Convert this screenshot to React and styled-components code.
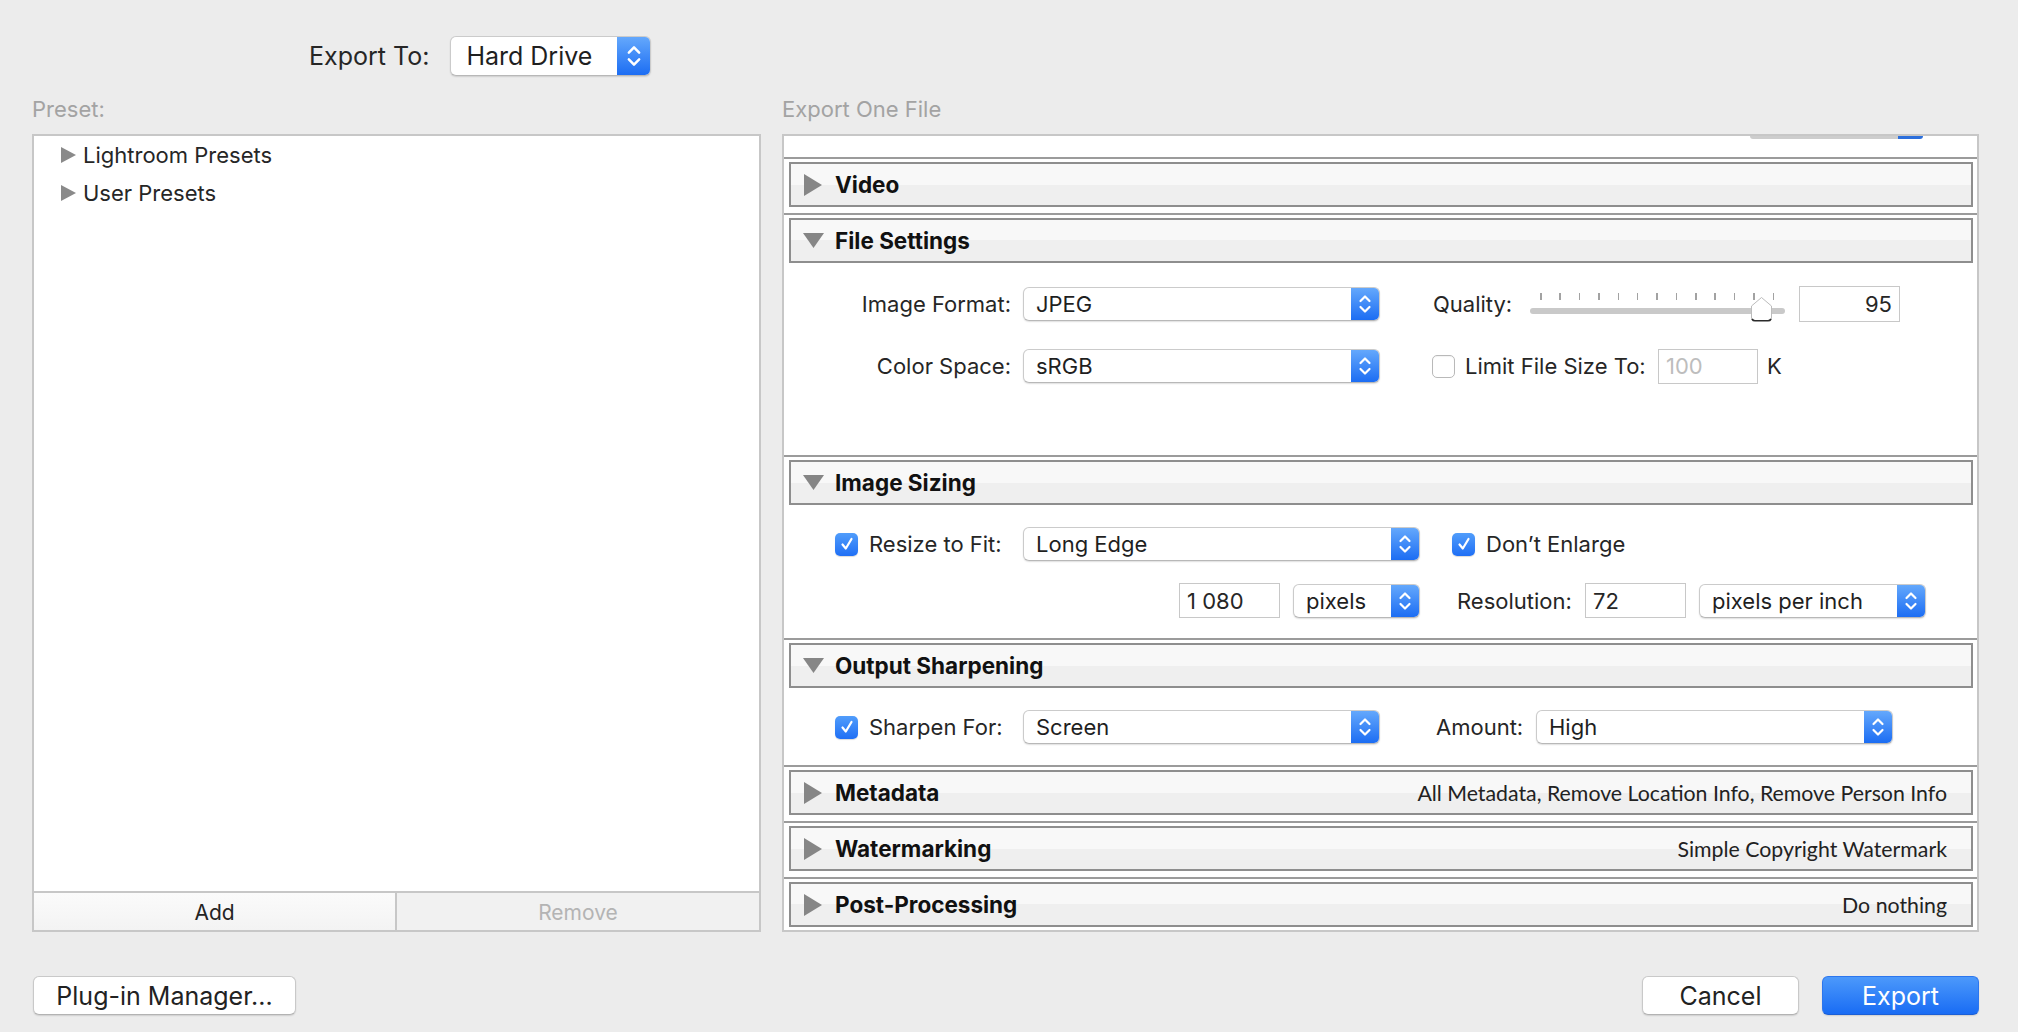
import React from "react";
import styled, { createGlobalStyle } from "styled-components";

const GlobalStyle = createGlobalStyle`
  html, body { margin: 0; padding: 0; background: #ececec; }
  body { font-family: Inter, "Noto Sans", sans-serif; color: #242424; }
  * { box-sizing: border-box; }
`;

const Page = styled.div`
  width: 2018px;
  height: 1032px;
  padding: 36px 39px 0 32px;
  display: flex;
  flex-direction: column;
  overflow: hidden;
`;

const TopRow = styled.div`
  display: flex;
  align-items: center;
  height: 40px;
  padding-left: 277px;
  gap: 21px;
`;

const BigLabel = styled.span`
  font-size: 25px;
  color: #262626;
`;

const SelectBox = styled.div`
  display: flex;
  flex-shrink: 0;
  width: ${(p) => p.$w}px;
  height: ${(p) => p.$h || 34}px;
  margin-left: ${(p) => p.$ml || 0}px;
  background: #fff;
  border: 1px solid #cbcbcb;
  border-bottom-color: #b8b8b8;
  border-radius: 6px;
  box-shadow: 0 1px 1.5px rgba(0, 0, 0, 0.13);
  overflow: hidden;
`;

const SelectText = styled.div`
  flex: 1;
  display: flex;
  align-items: center;
  padding-left: ${(p) => p.$pad || 12}px;
  font-size: ${(p) => p.$fs || 22}px;
  color: #1f1f1f;
  white-space: nowrap;
`;

const SelectArrow = styled.div`
  width: ${(p) => p.$aw || 28}px;
  display: flex;
  align-items: center;
  justify-content: center;
  background: linear-gradient(#64a8fc, #1c6df3);
`;

const Chevrons = ({ big }) => (
  <svg width={big ? 16 : 14} height={big ? 26 : 22} viewBox="0 0 14 22">
    <path d="M2.5 8 L7 3.5 L11.5 8" fill="none" stroke="#fff" strokeWidth="2.2" strokeLinecap="round" strokeLinejoin="round" />
    <path d="M2.5 14 L7 18.5 L11.5 14" fill="none" stroke="#fff" strokeWidth="2.2" strokeLinecap="round" strokeLinejoin="round" />
  </svg>
);

const Select = ({ w, h, ml, fs, pad, aw, big, children }) => (
  <SelectBox $w={w} $h={h} $ml={ml}>
    <SelectText $fs={fs} $pad={pad}>{children}</SelectText>
    <SelectArrow $aw={aw}>
      <Chevrons big={big} />
    </SelectArrow>
  </SelectBox>
);

const MainGrid = styled.div`
  display: grid;
  grid-template-columns: 729px 1197px;
  grid-template-rows: 24px 798px;
  column-gap: 21px;
  row-gap: 13px;
  margin-top: 21px;
`;

const Caption = styled.div`
  font-size: 22px;
  line-height: 24px;
  color: #a3a3a3;
`;

const PresetPanel = styled.div`
  border: 2px solid #c7c7c7;
  background: #fff;
  display: flex;
  flex-direction: column;
`;

const TreeList = styled.div`
  display: flex;
  flex-direction: column;
  padding-left: 27px;
`;

const TreeItem = styled.div`
  height: 38px;
  display: flex;
  align-items: center;
  gap: 7px;
  font-size: 22px;
  color: #262626;
`;

const PresetFooter = styled.div`
  margin-top: auto;
  display: flex;
  height: 39px;
  border-top: 2px solid #c7c7c7;
`;

const FooterButton = styled.div`
  width: ${(p) => (p.$w ? `${p.$w}px` : "auto")};
  flex: ${(p) => (p.$w ? "none" : 1)};
  display: flex;
  align-items: center;
  justify-content: center;
  font-size: 21px;
  padding-top: 1px;
  color: ${(p) => (p.$disabled ? "#b4b4b4" : "#242424")};
  background: ${(p) => (p.$disabled ? "#f1f1f1" : "linear-gradient(#fbfbfb, #f3f3f3)")};
  border-right: ${(p) => (p.$divider ? "2px solid #c7c7c7" : "none")};
`;

const ExportPanel = styled.div`
  border: 2px solid #c7c7c7;
  background: #fff;
  display: flex;
  flex-direction: column;
  overflow: hidden;
`;

const TopStub = styled.div`
  height: 21px;
  flex-shrink: 0;
  display: flex;
  justify-content: flex-end;
  padding-right: 54px;
`;

const StubSelect = styled.div`
  width: 173px;
  height: 3px;
  border-radius: 0 0 4px 4px;
  background: linear-gradient(to right, #cdcdcd 0, #cdcdcd 148px, #2c6fdc 148px);
`;

const Section = styled.div`
  flex-shrink: 0;
  border-top: 2px solid #9b9b9b;
  padding: 3px 4px 6px 5px;
`;

const SectionHeader = styled.div`
  height: 45px;
  border: 2px solid #8e8e8e;
  background: linear-gradient(#f8f8f8 0, #f8f8f8 50%, #efefef 50%, #efefef 100%);
  display: flex;
  align-items: center;
  padding: 0 24px 0 11px;
`;

const HeaderIcon = styled.div`
  width: 22px;
  display: flex;
  justify-content: center;
  margin-right: 11px;
`;

const HeaderTitle = styled.span`
  font-weight: 700;
  font-size: 22.5px;
  color: #111;
`;

const HeaderSummary = styled.span`
  margin-left: auto;
  font-family: Lato, "Noto Sans", sans-serif;
  font-size: 21.3px;
  color: #222;
`;

const SectionBody = styled.div`
  height: ${(p) => p.$h}px;
  padding-top: ${(p) => p.$pt}px;
  display: flex;
  flex-direction: column;
  gap: ${(p) => p.$gap || 0}px;
`;

const Row = styled.div`
  display: flex;
  align-items: center;
  height: ${(p) => p.$h || 34}px;
`;

const RowLabel = styled.span`
  flex-shrink: 0;
  width: ${(p) => (p.$w ? `${p.$w}px` : "auto")};
  margin-left: ${(p) => p.$ml || 0}px;
  text-align: ${(p) => p.$align || "left"};
  font-size: 22px;
  color: #262626;
  white-space: nowrap;
`;

const TextInput = styled.div`
  flex-shrink: 0;
  width: ${(p) => p.$w}px;
  height: ${(p) => p.$h || 35}px;
  margin-left: ${(p) => p.$ml || 0}px;
  border: 1.5px solid #c8c8c8;
  background: #fff;
  display: flex;
  align-items: center;
  justify-content: ${(p) => (p.$align === "right" ? "flex-end" : "flex-start")};
  padding: 0 7px;
  font-size: 22px;
  color: ${(p) => (p.$muted ? "#bdbdbd" : "#262626")};
`;

const CheckBoxEl = styled.div`
  flex-shrink: 0;
  width: 23px;
  height: 23px;
  margin-left: ${(p) => p.$ml || 0}px;
  border-radius: 5px;
  display: flex;
  align-items: center;
  justify-content: center;
  background: ${(p) => (p.$checked ? "linear-gradient(#519dfb, #1f6ff5)" : "#fff")};
  border: ${(p) => (p.$checked ? "none" : "1.5px solid #b9b9b9")};
  box-shadow: ${(p) => (p.$checked ? "0 1px 1px rgba(0,0,0,0.15)" : "inset 0 1px 1px rgba(0,0,0,0.05)")};
`;

const Checkbox = ({ checked, ml }) => (
  <CheckBoxEl $checked={checked} $ml={ml}>
    {checked && (
      <svg width="16" height="16" viewBox="0 0 16 16">
        <path d="M3.5 8.5 L6.8 12.5 L12.5 3" fill="none" stroke="#fff" strokeWidth="2.2" strokeLinecap="round" strokeLinejoin="round" />
      </svg>
    )}
  </CheckBoxEl>
);

const SliderWrap = styled.div`
  position: relative;
  flex-shrink: 0;
  width: 255px;
  height: 34px;
`;

const Ticks = styled.div`
  display: flex;
  justify-content: space-between;
  padding: 6px 11px 0 10px;
  height: 13px;
`;

const Tick = styled.div`
  width: 1.5px;
  height: 7px;
  background: #a2a2a2;
`;

const Track = styled.div`
  margin-top: 8px;
  height: 6px;
  border-radius: 3px;
  background: #c9c9c9;
`;

const Thumb = styled.svg`
  position: absolute;
  left: ${(p) => p.$left}px;
  top: 9px;
`;

const Slider = ({ pos }) => (
  <SliderWrap>
    <Ticks>
      {Array.from({ length: 13 }).map((_, i) => (
        <Tick key={i} />
      ))}
    </Ticks>
    <Track />
    <Thumb $left={pos} width="23" height="26" viewBox="0 0 23 26">
      <path d="M1.5 10 L11.5 1.5 L21.5 10 L21.5 22 Q21.5 24.5 19 24.5 L4 24.5 Q1.5 24.5 1.5 22 Z" fill="#fff" stroke="#bcbcbc" strokeWidth="1" />
      <path d="M2 23 Q3 24.8 5 24.8 L18 24.8 Q20 24.8 21 23" fill="none" stroke="#2a2a2a" strokeWidth="1.6" />
    </Thumb>
  </SliderWrap>
);

const BottomRow = styled.div`
  display: flex;
  align-items: center;
  justify-content: space-between;
  margin-top: 44px;
  padding-left: 1px;
`;

const ButtonGroup = styled.div`
  display: flex;
  gap: 23px;
`;

const PushButton = styled.div`
  width: ${(p) => p.$w}px;
  height: 39px;
  display: flex;
  align-items: center;
  justify-content: center;
  border-radius: 6px;
  font-size: 25px;
  color: ${(p) => (p.$primary ? "#fff" : "#222")};
  background: ${(p) => (p.$primary ? "linear-gradient(#4c99fb, #196cf4)" : "#fff")};
  border: 1px solid ${(p) => (p.$primary ? "#2c76ee" : "#c9c9c9")};
  border-bottom-color: ${(p) => (p.$primary ? "#1b5fd6" : "#b3b3b3")};
  box-shadow: 0 1px 1.5px rgba(0, 0, 0, 0.12);
`;

const TriRight = ({ w = 18, h = 22, color = "#868686" }) => (
  <svg width={w} height={h} viewBox={`0 0 ${w} ${h}`}>
    <polygon points={`0,0 ${w},${h / 2} 0,${h}`} fill={color} />
  </svg>
);

const TriDown = () => (
  <svg width="21" height="15" viewBox="0 0 21 15">
    <polygon points="0,0 21,0 10.5,15" fill="#868686" />
  </svg>
);

const Header = ({ open, title, summary }) => (
  <SectionHeader>
    <HeaderIcon>{open ? <TriDown /> : <TriRight />}</HeaderIcon>
    <HeaderTitle>{title}</HeaderTitle>
    {summary && <HeaderSummary>{summary}</HeaderSummary>}
  </SectionHeader>
);

export default function App() {
  return (
    <>
      <GlobalStyle />
      <Page>
        <TopRow>
          <BigLabel>Export To:</BigLabel>
          <Select w={201} h={40} fs={25} pad={15} aw={33} big>
            Hard Drive
          </Select>
        </TopRow>

        <MainGrid>
          <Caption>Preset:</Caption>
          <Caption>Export One File</Caption>

          <PresetPanel>
            <TreeList>
              <TreeItem>
                <TriRight w={15} h={16} color="#8a8a8a" />
                Lightroom Presets
              </TreeItem>
              <TreeItem>
                <TriRight w={15} h={16} color="#8a8a8a" />
                User Presets
              </TreeItem>
            </TreeList>
            <PresetFooter>
              <FooterButton $w={363} $divider>
                Add
              </FooterButton>
              <FooterButton $disabled>Remove</FooterButton>
            </PresetFooter>
          </PresetPanel>

          <ExportPanel>
            <TopStub>
              <StubSelect />
            </TopStub>

            <Section>
              <Header title="Video" />
            </Section>

            <Section>
              <Header open title="File Settings" />
              <SectionBody $h={186} $pt={24} $gap={28}>
                <Row>
                  <RowLabel $w={222} $align="right">Image Format:</RowLabel>
                  <Select w={357} ml={12}>JPEG</Select>
                  <RowLabel $ml={53} $w={97}>Quality:</RowLabel>
                  <Slider pos={220} />
                  <TextInput $ml={14} $w={101} $h={36} $align="right">95</TextInput>
                </Row>
                <Row>
                  <RowLabel $w={222} $align="right">Color Space:</RowLabel>
                  <Select w={357} ml={12}>sRGB</Select>
                  <Checkbox ml={52} />
                  <RowLabel $ml={10} $w={193}>Limit File Size To:</RowLabel>
                  <TextInput $w={100} $muted>100</TextInput>
                  <RowLabel $ml={9}>K</RowLabel>
                </Row>
              </SectionBody>
            </Section>

            <Section>
              <Header open title="Image Sizing" />
              <SectionBody $h={127} $pt={22} $gap={22}>
                <Row>
                  <Checkbox checked ml={46} />
                  <RowLabel $ml={11} $w={154}>Resize to Fit:</RowLabel>
                  <Select w={397}>Long Edge</Select>
                  <Checkbox checked ml={32} />
                  <RowLabel $ml={11}>Don’t Enlarge</RowLabel>
                </Row>
                <Row $h={35}>
                  <TextInput $ml={390} $w={101}>1 080</TextInput>
                  <Select w={127} ml={13}>pixels</Select>
                  <RowLabel $ml={37} $w={128}>Resolution:</RowLabel>
                  <TextInput $w={101}>72</TextInput>
                  <Select w={227} ml={13}>pixels per inch</Select>
                </Row>
              </SectionBody>
            </Section>

            <Section>
              <Header open title="Output Sharpening" />
              <SectionBody $h={71} $pt={22}>
                <Row>
                  <Checkbox checked ml={46} />
                  <RowLabel $ml={11} $w={154}>Sharpen For:</RowLabel>
                  <Select w={357}>Screen</Select>
                  <RowLabel $ml={56} $w={100}>Amount:</RowLabel>
                  <Select w={357}>High</Select>
                </Row>
              </SectionBody>
            </Section>

            <Section>
              <Header title="Metadata" summary="All Metadata, Remove Location Info, Remove Person Info" />
            </Section>
            <Section>
              <Header title="Watermarking" summary="Simple Copyright Watermark" />
            </Section>
            <Section>
              <Header title="Post-Processing" summary="Do nothing" />
            </Section>
          </ExportPanel>
        </MainGrid>

        <BottomRow>
          <PushButton $w={263}>Plug-in Manager...</PushButton>
          <ButtonGroup>
            <PushButton $w={157}>Cancel</PushButton>
            <PushButton $w={157} $primary>Export</PushButton>
          </ButtonGroup>
        </BottomRow>
      </Page>
    </>
  );
}
